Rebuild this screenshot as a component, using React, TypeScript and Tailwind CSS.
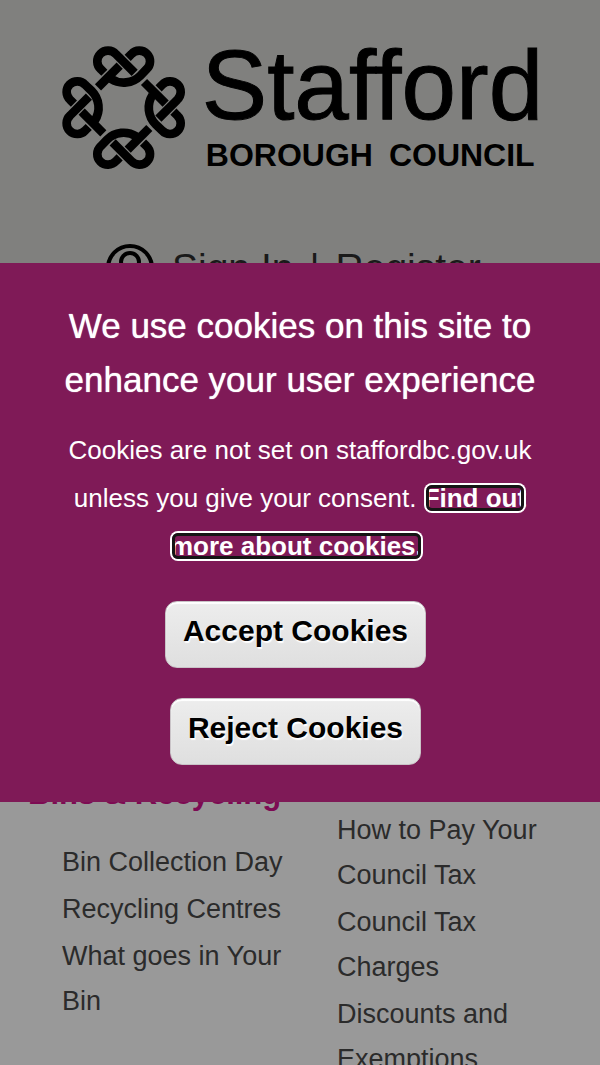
interface ColumnProps {
  title: string;
  links: string[];
  className?: string;
}

const binLinks = ["Bin Collection Day", "Recycling Centres", "What goes in Your Bin"];

const councilTaxLinks = [
  "How to Pay Your Council Tax",
  "Council Tax Charges",
  "Discounts and Exemptions",
];

// One knot of the emblem, repeated every quarter turn
function Knot({ angle }: { angle: number }) {
  return (
    <g transform={`rotate(${angle} 218 218)`}>
      <path d="M160 113.2 L149.4 102.6 A32 32 0 1 1 194.6 57.4 L251 113.8" />
      <path d="M230 68.8 L241.4 57.4 A32 32 0 1 1 286.6 102.6 L268 122 A70.7 70.7 0 0 1 180 131.6" />
      <path d="M206 92 L141 157" />
    </g>
  );
}

function Logo() {
  return (
    <a href="#" className="flex items-start justify-center gap-1.5 pr-1.5 text-black">
      <svg viewBox="0 0 435 435" className="size-[145px] shrink-0" fill="none" stroke="currentColor" strokeWidth="26">
        <Knot angle={0} />
        <Knot angle={90} />
        <Knot angle={180} />
        <Knot angle={270} />
      </svg>
      <span className="flex flex-col">
        <span className="text-[98px] leading-[100px] [-webkit-text-stroke:1px_#000000]">Stafford</span>
        <span className="mt-1 flex gap-4 pl-1 text-[32px] leading-8 font-bold">
          <span>BOROUGH</span>
          <span>COUNCIL</span>
        </span>
      </span>
    </a>
  );
}

function LinkColumn({ title, links, className = "" }: ColumnProps) {
  return (
    <section className={className}>
      <h2 className="mb-6 text-[31px] leading-[45px] font-bold whitespace-nowrap text-[#7d0b53]">{title}</h2>
      <ul className="flex flex-col gap-0.5 pl-[34px] text-[27px] leading-[45px] text-[#2b2b2b]">
        {links.map((link) => (
          <li key={link}>
            <a href="#">{link}</a>
          </li>
        ))}
      </ul>
    </section>
  );
}

// Text with the focus ring painted over it
function FocusedText({ children }: { children: string }) {
  return (
    <span className="relative whitespace-nowrap after:absolute after:inset-0.5 after:rounded-md after:border-3 after:border-[#151515] after:ring-2 after:ring-white">
      {children}
    </span>
  );
}

function CookieButton({ label }: { label: string }) {
  return (
    <button
      type="button"
      className="rounded-xl border border-[#c9c3c7] bg-linear-to-b from-[#ededed] to-[#dfdfdf] px-[17px] pt-[7px] pb-[15px] text-[30px] leading-[43px] font-bold text-black shadow-[inset_0_2px_1px_#ffffff] text-shadow-[1px_2px_1px_#ffffff]"
    >
      {label}
    </button>
  );
}

export default function App() {
  return (
    <div className="h-screen overflow-hidden bg-[#999999] font-['Liberation_Sans',Arial,sans-serif]">
      <header className="h-[600px] bg-[#80807e] pt-[35px]">
        <Logo />
        <div className="mt-16 flex items-center gap-[18px] pl-[106px]">
          <svg viewBox="0 0 48 48" className="size-12" fill="none" stroke="#000000" strokeWidth="4">
            <circle cx="24" cy="24" r="22" />
            <circle cx="24" cy="18" r="9" />
            <path d="M8 39 C12 31 36 31 40 39" />
          </svg>
          <nav className="flex gap-4 text-[39px] leading-[48px] text-[#1a1a1a]">
            <a href="#">Sign In</a>
            <span>|</span>
            <a href="#">Register</a>
          </nav>
        </div>
      </header>

      <main className="grid grid-cols-[275px_1fr] pr-6 pl-7 pt-[139px]">
        <LinkColumn title="Bins & Recycling" links={binLinks} className="pt-8 pr-3" />
        <LinkColumn title="Council Tax" links={councilTaxLinks} className="pr-6" />
      </main>

      {/* Cookie banner */}
      <div className="fixed inset-0 flex items-center">
        <div
          role="dialog"
          aria-labelledby="cookie-title"
          className="flex w-full flex-col items-center bg-[#7f1a57] px-[60px] pt-9 pb-[37px] text-center text-white"
        >
          <h2 id="cookie-title" className="mb-[19px] text-[35px] leading-[54px] text-shadow-[0_0_1px_#ffffff]">
            We use cookies on this site to enhance your user experience
          </h2>
          <p className="mb-[31px] text-[26px] leading-[48px]">
            Cookies are not set on staffordbc.gov.uk unless you give your consent.{" "}
            <a href="#" className="font-bold">
              <FocusedText>Find out</FocusedText> <FocusedText>more about cookies.</FocusedText>
            </a>
            &nbsp;
          </p>
          <div className="flex flex-col items-center gap-[30px] pr-[9px]">
            <CookieButton label="Accept Cookies" />
            <CookieButton label="Reject Cookies" />
          </div>
        </div>
      </div>
    </div>
  );
}
